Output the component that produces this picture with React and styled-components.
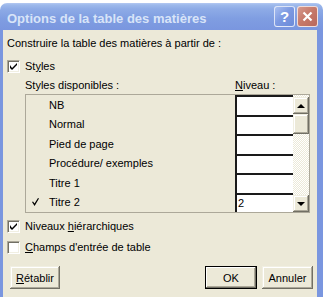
import React from "react";
import styled, { createGlobalStyle, css } from "styled-components";

const face = "#ECE9D8";
const light = "#FFFFFF";
const shadow = "#ACA899";
const dark = "#716F64";
const frame = "#7A96DF";

const GlobalStyle = createGlobalStyle`
  html, body {
    margin: 0;
    padding: 0;
    background: #fff;
  }
  body {
    font-family: "Liberation Sans", Arial, sans-serif;
    font-size: 11px;
    color: #000;
  }
`;

const Screen = styled.div`
  width: 323px;
  height: 297px;
  overflow: hidden;
  padding-top: 3px;
  box-sizing: border-box;
  background: #fff;
`;

const Window = styled.div`
  display: flex;
  flex-direction: column;
  height: 294px;
`;

const TitleBar = styled.div`
  height: 27px;
  flex: none;
  display: flex;
  align-items: flex-start;
  justify-content: space-between;
  padding: 0 5px 0 7px;
  border-radius: 7px 7px 0 0;
  background: linear-gradient(
    to bottom,
    #b4c8f2 0px,
    #9db9eb 2px,
    #8eabe6 6px,
    #7f9de1 16px,
    #7a96df 27px
  );
`;

const Title = styled.span`
  margin-top: 8px;
  font-family: "Liberation Sans", Arial, sans-serif;
  font-weight: bold;
  font-size: 13px;
  line-height: 15px;
  color: #d8e4f8;
  letter-spacing: 0;
`;

const Caps = styled.div`
  display: flex;
  gap: 2px;
  margin-top: 3px;
`;

const CapButton = styled.div`
  width: 21px;
  height: 21px;
  box-sizing: border-box;
  border: 1px solid rgba(255, 255, 255, 0.75);
  border-radius: 3px;
  display: flex;
  align-items: center;
  justify-content: center;
  color: #fff;
  font-family: "Liberation Sans", Arial, sans-serif;
  font-weight: bold;
  font-size: 15px;
  ${(p) =>
    p.$kind === "close"
      ? css`
          background: linear-gradient(135deg, #d59a8f 0%, #c77a6b 45%, #b9685c 100%);
        `
      : css`
          background: linear-gradient(135deg, #a9bff0 0%, #7d9ae2 45%, #6c8bd9 100%);
        `}
`;

const Body = styled.div`
  flex: 1;
  display: flex;
  flex-direction: column;
  background: ${face};
  border-left: 3px solid ${frame};
  border-right: 6px solid ${frame};
  padding: 7px 7px 0 4px;
`;

const Text = styled.div`
  line-height: 13px;
  height: 13px;
  white-space: nowrap;
`;

const CheckRow = styled.label`
  display: flex;
  align-items: center;
  gap: 5px;
  height: 13px;
  line-height: 13px;
  margin-top: ${(p) => p.$gap || 0}px;
`;

const Box = styled.span`
  width: 13px;
  height: 13px;
  box-sizing: border-box;
  flex: none;
  background: #fff;
  border: 1px solid;
  border-color: ${shadow} ${light} ${light} ${shadow};
  box-shadow: inset 1px 1px 0 ${dark}, inset -1px -1px 0 #f1efe2;
  display: flex;
  align-items: center;
  justify-content: center;
`;

const CheckBox = ({ checked }) => (
  <Box>
    {checked && (
      <svg width="7" height="7" viewBox="0 0 7 7">
        <path d="M0 2 L0 5 L2 7 L7 2 L7 0 L2 5 Z" fill="#000" />
      </svg>
    )}
  </Box>
);

const Section = styled.div`
  margin-left: 18px;
  margin-top: 6px;
  display: flex;
  flex-direction: column;
`;

const HeaderRow = styled.div`
  display: grid;
  grid-template-columns: 1fr 75px;
  height: 13px;
  line-height: 13px;
`;

const ListBox = styled.div`
  margin-top: 2px;
  display: flex;
  border: 1px solid ${shadow};
  height: 117px;
`;

const Rows = styled.div`
  flex: 1;
  display: grid;
  grid-template-rows: repeat(6, 1fr);
`;

const Row = styled.div`
  display: grid;
  grid-template-columns: 23px 1fr 58px;
  align-items: center;
`;

const Mark = styled.span`
  display: flex;
  padding-left: 6px;
`;

const Level = styled.div`
  align-self: stretch;
  background: #fff;
  box-sizing: border-box;
  border-top: 2px solid #1a1a1a;
  border-left: 2px solid #1a1a1a;
  padding: 1px 0 0 1px;
  line-height: 15px;
`;

const ScrollBar = styled.div`
  width: 16px;
  display: flex;
  flex-direction: column;
  padding-top: 2px;
  box-sizing: border-box;
  background-color: #fff;
  background-image: conic-gradient(${face} 25%, #fff 0 50%, ${face} 0 75%, #fff 0);
  background-size: 2px 2px;
`;

const bevel = css`
  background: ${face};
  box-sizing: border-box;
  box-shadow: inset -1px -1px 0 ${dark}, inset 1px 1px 0 #f1efe2,
    inset -2px -2px 0 ${shadow}, inset 2px 2px 0 ${light};
`;

const ScrollButton = styled.div`
  ${bevel};
  height: 17px;
  flex: none;
  display: flex;
  align-items: center;
  justify-content: center;
  &::after {
    content: "";
    width: 0;
    height: 0;
    border-left: 4px solid transparent;
    border-right: 4px solid transparent;
    ${(p) =>
      p.$dir === "up"
        ? css`border-bottom: 4px solid #000;`
        : css`border-top: 4px solid #000;`}
  }
`;

const Thumb = styled.div`
  ${bevel};
  height: 20px;
  flex: none;
`;

const Track = styled.div`
  flex: 1;
`;

const ButtonRow = styled.div`
  display: flex;
  margin: 12px -3px 0 3px;
  gap: 5px;
`;

const Button = styled.div`
  ${bevel};
  width: ${(p) => p.$w}px;
  height: 23px;
  display: flex;
  align-items: center;
  justify-content: center;
  ${(p) =>
    p.$default &&
    css`
      border: 1px solid #000;
      box-shadow: inset -1px -1px 0 ${dark}, inset 1px 1px 0 ${light},
        inset -2px -2px 0 ${shadow};
    `}
  ${(p) => p.$push && css`margin-left: auto;`}
`;

const styles = [
  { name: "NB" },
  { name: "Normal" },
  { name: "Pied de page" },
  { name: "Procédure/ exemples" },
  { name: "Titre 1" },
  { name: "Titre 2", level: "2", used: true },
];

export default function App() {
  return (
    <>
      <GlobalStyle />
      <Screen>
        <Window>
          <TitleBar>
            <Title>Options de la table des matières</Title>
            <Caps>
              <CapButton $kind="help">?</CapButton>
              <CapButton $kind="close">
                <svg width="11" height="11" viewBox="0 0 11 11">
                  <path d="M1.5 1.5 L9.5 9.5 M9.5 1.5 L1.5 9.5" stroke="#fff" strokeWidth="2.2" />
                </svg>
              </CapButton>
            </Caps>
          </TitleBar>
          <Body>
            <Text>Construire la table des matières à partir de :</Text>
            <CheckRow $gap={10}>
              <CheckBox checked />
              <span>
                St<u>y</u>les
              </span>
            </CheckRow>
            <Section>
              <HeaderRow>
                <span>Styles disponibles :</span>
                <span>
                  <u>N</u>iveau :
                </span>
              </HeaderRow>
              <ListBox>
                <Rows>
                  {styles.map((s) => (
                    <Row key={s.name}>
                      <Mark>
                        {s.used && (
                          <svg width="7" height="8" viewBox="0 0 7 8">
                            <path d="M0 4 L1 3.5 L2.5 5.5 L6 0 L7 0.5 L2.6 8 Z" fill="#000" />
                          </svg>
                        )}
                      </Mark>
                      <span>{s.name}</span>
                      <Level>{s.level}</Level>
                    </Row>
                  ))}
                </Rows>
                <ScrollBar>
                  <ScrollButton $dir="up" />
                  <Thumb />
                  <Track />
                  <ScrollButton $dir="down" />
                </ScrollBar>
              </ListBox>
            </Section>
            <CheckRow $gap={7}>
              <CheckBox checked />
              <span>
                Niveaux <u>h</u>iérarchiques
              </span>
            </CheckRow>
            <CheckRow $gap={8}>
              <CheckBox />
              <span>
                <u>C</u>hamps d'entrée de table
              </span>
            </CheckRow>
            <ButtonRow>
              <Button $w={50}>
                <span>
                  <u>R</u>établir
                </span>
              </Button>
              <Button $w={52} $default $push>
                OK
              </Button>
              <Button $w={51}>Annuler</Button>
            </ButtonRow>
          </Body>
        </Window>
      </Screen>
    </>
  );
}
